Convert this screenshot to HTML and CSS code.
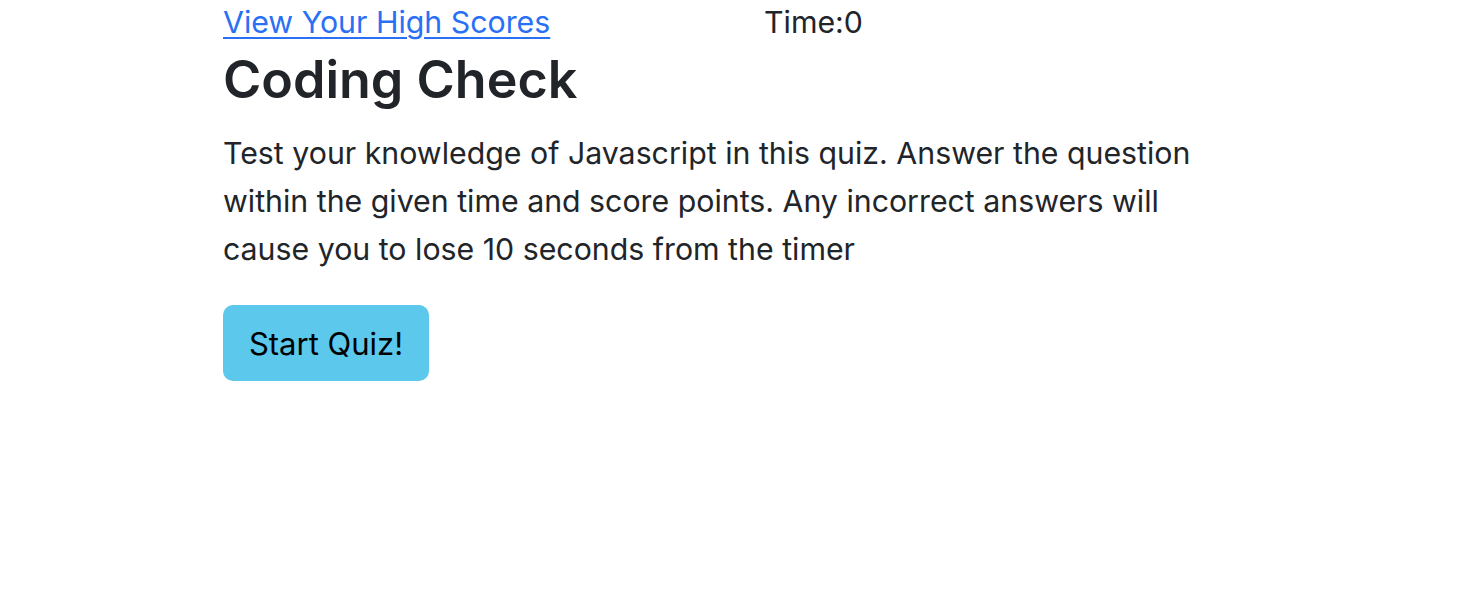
FILE: index.html
```html
<!DOCTYPE html>
<html lang="en">
<head>
<meta charset="utf-8">
<title>Coding Check</title>
<link rel="stylesheet" href="styles.css">
</head>
<body>
<div class="container">
  <header class="topbar">
    <a class="scores-link" href="#">View Your High Scores</a>
    <span class="timer">Time:0</span>
  </header>
  <h1 class="title">Coding Check</h1>
  <p class="intro">Test your knowledge of Javascript in this quiz. Answer the question within the given time and score points. Any incorrect answers will cause you to lose 10 seconds from the timer</p>
  <button class="start-btn" type="button">Start Quiz!</button>
</div>
</body>
</html>
```
FILE: styles.css
```css
html, body {
  margin: 0;
  padding: 0;
  background: #ffffff;
}
body {
  font-family: Inter, "Noto Sans", "Liberation Sans", sans-serif;
  color: #212529;
  font-size: 30.3px;
  line-height: 1.5;
}
.container {
  width: 1038px;
  margin: 0 auto;
}
.topbar {
  display: grid;
  grid-template-columns: 541px auto;
  align-items: baseline;
  height: 45px;
  line-height: 45px;
  font-size: 30.3px;
}
.scores-link {
  justify-self: start;
  color: #2a70f5;
  text-decoration: underline;
  text-decoration-thickness: 2px;
  text-underline-offset: 4px;
}
.timer {
  color: #212529;
}
.title {
  margin: 0 0 18px;
  padding-top: 4px;
  font-size: 52px;
  font-weight: 600;
  line-height: 62px;
}
.intro {
  max-width: 1000px;
  margin: 0 0 32px;
  font-size: 30.3px;
  line-height: 48px;
}
.start-btn {
  display: block;
  font-family: inherit;
  font-size: 31px;
  color: #000;
  background: #5bc8ec;
  border: 0;
  border-radius: 10px;
  width: 206px;
  height: 76px;
  padding: 0;
}
```
